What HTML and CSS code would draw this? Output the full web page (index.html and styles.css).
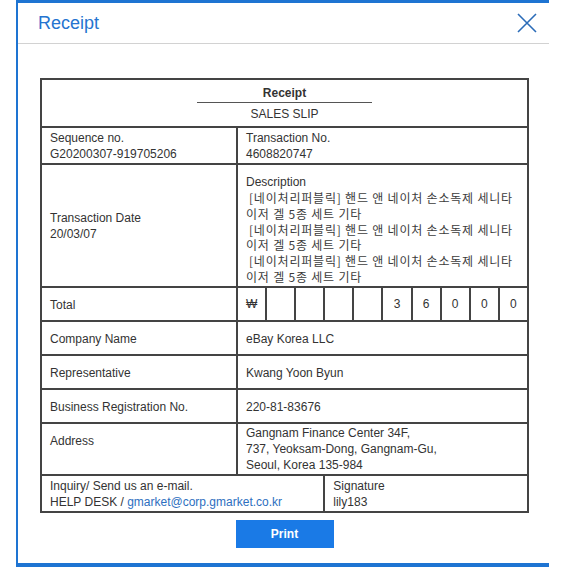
FILE: index.html
```html
<!DOCTYPE html>
<html lang="en">
<head>
<meta charset="utf-8">
<title>Receipt</title>
<link rel="stylesheet" href="styles.css">
</head>
<body>
<div class="modal">
  <div class="header">
    <h1 class="title">Receipt</h1>
    <button class="close" aria-label="Close">
      <svg width="20" height="20" viewBox="0 0 20 20"><path d="M1 1 L19 19 M19 1 L1 19" stroke="#2b6cb8" stroke-width="1.6" fill="none"/></svg>
    </button>
  </div>
  <div class="content">
    <table class="receipt">
      <colgroup>
        <col class="col-label">
        <col><col><col><col><col><col><col><col><col><col>
      </colgroup>
      <tr class="r-title">
        <td colspan="11" class="head-cell">
          <div class="head-main">Receipt</div>
          <div class="head-sub">SALES SLIP</div>
        </td>
      </tr>
      <tr class="r-seq">
        <td>Sequence no.<br>G20200307-919705206</td>
        <td colspan="10">Transaction No.<br>4608820747</td>
      </tr>
      <tr class="r-desc">
        <td>Transaction Date<br>20/03/07</td>
        <td colspan="10" class="desc">
          <div>Description</div>
          <div class="kr"><span class="ind">[네이처리퍼블릭] 핸드 앤 네이처 손소독제 세니타</span><br>이저 겔 5종 세트 기타</div>
          <div class="kr"><span class="ind">[네이처리퍼블릭] 핸드 앤 네이처 손소독제 세니타</span><br>이저 겔 5종 세트 기타</div>
          <div class="kr"><span class="ind">[네이처리퍼블릭] 핸드 앤 네이처 손소독제 세니타</span><br>이저 겔 5종 세트 기타</div>
        </td>
      </tr>
      <tr class="r-one">
        <td>Total</td>
        <td class="num">₩</td>
        <td class="num"></td>
        <td class="num"></td>
        <td class="num"></td>
        <td class="num"></td>
        <td class="num">3</td>
        <td class="num">6</td>
        <td class="num">0</td>
        <td class="num">0</td>
        <td class="num">0</td>
      </tr>
      <tr class="r-one">
        <td>Company Name</td>
        <td colspan="10">eBay Korea LLC</td>
      </tr>
      <tr class="r-one">
        <td>Representative</td>
        <td colspan="10">Kwang Yoon Byun</td>
      </tr>
      <tr class="r-one">
        <td>Business Registration No.</td>
        <td colspan="10">220-81-83676</td>
      </tr>
      <tr class="r-addr">
        <td class="addr-label">Address</td>
        <td colspan="10" class="addr">Gangnam Finance Center 34F,<br>737, Yeoksam-Dong, Gangnam-Gu,<br>Seoul, Korea 135-984</td>
      </tr>
      <tr class="r-inq">
        <td colspan="4">Inquiry/ Send us an e-mail.<br>HELP DESK / <a class="mail" href="#">gmarket@corp.gmarket.co.kr</a></td>
        <td colspan="7">Signature<br>lily183</td>
      </tr>
    </table>
    <div class="actions">
      <button class="print">Print</button>
    </div>
  </div>
</div>
</body>
</html>
```
FILE: styles.css
```css
html, body {
  margin: 0;
  padding: 0;
  background: #ffffff;
}

body {
  font-family: "Liberation Sans", Arial, "Noto Sans CJK KR", sans-serif;
  color: #333333;
}

.modal {
  box-sizing: border-box;
  margin-left: 16px;
  width: 533px;
  height: 567px;
  border-left: 2px solid #1e74d2;
  border-top: 3px solid #1e74d2;
  border-bottom: 4px solid #1e74d2;
  background: #ffffff;
}

.header {
  height: 40px;
  display: flex;
  align-items: center;
  justify-content: space-between;
  padding: 0 12px 0 20px;
  border-bottom: 1px solid #d2d2d2;
}

.title {
  margin: 0;
  font-size: 18px;
  font-weight: normal;
  color: #2574d0;
}

.close {
  width: 20px;
  height: 20px;
  padding: 0;
  margin: 0;
  border: none;
  background: none;
  display: flex;
}

.content {
  padding: 34px 0 0 22px;
}

.receipt {
  width: 489px;
  border-collapse: collapse;
  table-layout: fixed;
  border: 2px solid #444444;
  font-size: 12px;
  line-height: 16px;
}

.col-label {
  width: 196px;
}

.receipt td {
  border: 2px solid #444444;
  padding: 1px 8px 0 8px;
  vertical-align: middle;
  white-space: nowrap;
}

.r-title { height: 48px; }
.r-seq { height: 37px; }
.r-desc { height: 123px; }
.r-one { height: 34px; }
.r-addr { height: 52px; }
.r-inq { height: 37px; }

.receipt td.head-cell {
  text-align: center;
  padding: 5px 0 4px;
}

.head-main {
  width: 175px;
  margin: 0 auto;
  font-weight: bold;
  border-bottom: 1px solid #555555;
  padding-bottom: 1px;
}

.head-sub {
  padding-top: 3px;
}

.receipt td.desc {
  line-height: 15.7px;
  padding-top: 9px;
  padding-bottom: 1px;
}

.kr {
  font-family: "Noto Sans CJK KR", "Liberation Sans", sans-serif;
  font-size: 12px;
  letter-spacing: 0.8px;
  color: #3c3c3c;
}

.ind {
  padding-left: 3px;
}

.receipt td.num {
  padding: 0;
  text-align: center;
}

.receipt td.addr-label {
  padding-bottom: 17px;
}

.receipt td.addr {
  vertical-align: top;
  padding-top: 1px;
}

.mail {
  color: #2d6fc0;
  text-decoration: none;
}

.actions {
  width: 489px;
  display: flex;
  justify-content: center;
  padding-top: 7px;
}

.print {
  width: 98px;
  height: 28px;
  border: none;
  background: #1a7ae6;
  color: #ffffff;
  font-family: "Liberation Sans", Arial, sans-serif;
  font-size: 12px;
  font-weight: bold;
  padding: 0;
}
```
